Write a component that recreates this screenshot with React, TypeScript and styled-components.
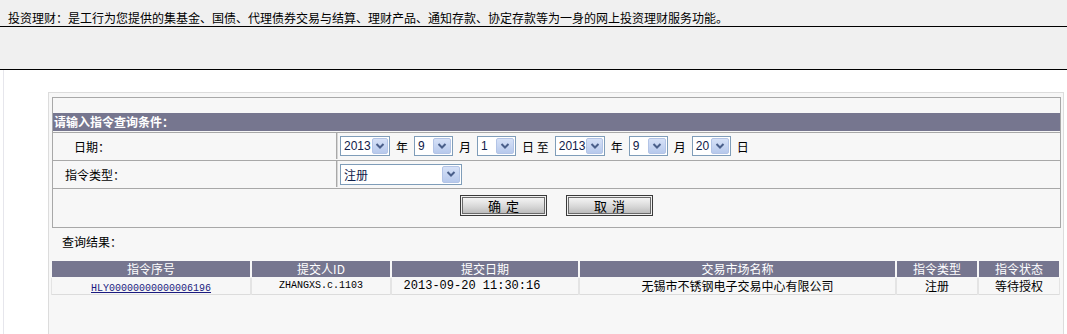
import styled, { createGlobalStyle } from "styled-components"

const GlobalStyle = createGlobalStyle`
  html, body {
    margin: 0;
    padding: 0;
    background: #ffffff;
    overflow: hidden;
  }
  body {
    font-family: "Noto Sans CJK SC", "Liberation Sans", sans-serif;
    font-size: 12px;
    color: #000;
  }
`

const cjk = `"Noto Sans CJK SC", "Liberation Sans", sans-serif`
const mono = `"Liberation Mono", "Noto Sans CJK SC", monospace`

const TopBar = styled.div`
  height: 16px;
  padding: 10px 0 0 8px;
  line-height: 16px;
  background: #f0f0f0;
  border-bottom: 1px solid #000;
  white-space: nowrap;
`

const Band = styled.div`
  height: 42px;
  background: #f0f0f0;
  border-bottom: 1px solid #000;
`

const Main = styled.div`
  padding-left: 3px;
`

const Content = styled.div`
  border-left: 1px solid #e6e6ec;
  padding: 22px 0 0 44px;
`

const Panel = styled.div`
  width: 1016px;
  height: 242px;
  box-sizing: border-box;
  overflow: hidden;
  border: 1px solid #dcdcdc;
  border-bottom: none;
  background: #f7f7f7;
  padding: 4px 0 0 3px;
`

const FormBox = styled.div`
  width: 1007px;
  border: 1px solid #a8a8a8;
  background: #f7f7f7;
`

const Spacer = styled.div`
  height: 15px;
`

const TitleBar = styled.div`
  height: 18px;
  line-height: 18px;
  padding-left: 1px;
  background: #76768f;
  color: #fff;
  font-weight: bold;
`

const FieldRow = styled.div`
  display: flex;
  margin-top: 1px;
  border-top: 1px solid #a8a8a8;
  height: 26px;
`

const LabelCell = styled.div<{ $indent: number }>`
  width: 284px;
  border-right: 1px solid #a8a8a8;
  display: flex;
  align-items: center;
  padding-left: ${p => p.$indent}px;
  box-sizing: border-box;
`

const ValueCell = styled.div`
  flex: 1;
  display: flex;
  align-items: center;
  padding-left: 2px;
  border-left: 1px solid #d6d6d6;
`

const SelectBox = styled.div<{ $w: number; $h?: number }>`
  width: ${p => p.$w}px;
  height: ${p => p.$h ?? 20}px;
  box-sizing: border-box;
  border: 1px solid #7f9db9;
  background: #fff;
  display: flex;
  align-items: stretch;
  font-family: "Liberation Sans", ${cjk};
  font-size: 12px;
  color: #10204a;
`

const SelectText = styled.span`
  flex: 1;
  padding-left: 3px;
  display: flex;
  align-items: center;
  white-space: nowrap;
`

const ArrowBtn = styled.span`
  width: 16px;
  margin: 1px;
  border: 1px solid #b3c4e6;
  border-radius: 2px;
  background: linear-gradient(#d6e1f7, #b7c9ec);
  display: flex;
  align-items: center;
  justify-content: center;
`

const Sep = styled.span`
  margin: 0 6px;
  font-family: ${cjk};
`

const ButtonRow = styled.div`
  display: flex;
  justify-content: center;
  gap: 19px;
  margin-top: 1px;
  border-top: 1px solid #a8a8a8;
  height: 39px;
  padding-top: 6px;
  box-sizing: border-box;
`

const Btn = styled.button`
  width: 87px;
  height: 21px;
  padding: 0;
  border: 1px solid #3a3a3a;
  box-shadow: inset 0 0 0 1px #f0f0f0, inset 0 0 0 2px #6a6a6a;
  background: linear-gradient(#fbfbfb, #d8d8d8 55%, #b4b4b4);
  font-family: ${cjk};
  font-size: 13px;
  letter-spacing: 5px;
  text-indent: 5px;
  color: #000;
  line-height: 17px;
`

const ResultLabel = styled.div`
  margin: 6px 0 0 10px;
  height: 16px;
  line-height: 16px;
`

const ResultGrid = styled.div`
  display: grid;
  grid-template-columns: 198px 138px 186px 315px 80px 80px;
  column-gap: 2px;
  row-gap: 1px;
  margin-top: 11px;
  width: 1007px;
  background: #f7f7f7;
`

const HeadCell = styled.div`
  height: 16px;
  line-height: 16px;
  background: #76768f;
  color: #fff;
  text-align: center;
  white-space: nowrap;
  font-family: ${cjk};
`

const DataCell = styled.div<{ $mono?: boolean; $size?: number; $shift?: number }>`
  height: 16px;
  line-height: 16px;
  text-align: center;
  white-space: nowrap;
  border-bottom: 1px solid #dcdcdc;
  box-shadow: 1px 0 0 #e4e4e4, -1px 0 0 #e4e4e4;
  font-family: ${p => (p.$mono ? mono : cjk)};
  font-size: ${p => p.$size ?? 12}px;
  padding-right: ${p => p.$shift ?? 0}px;
`

const OrderLink = styled.a`
  color: #1b1b80;
  text-decoration: underline;
  font-family: ${mono};
  font-size: 10px;
`

const Chevron = () => (
  <svg width="10" height="8" viewBox="0 0 10 8">
    <path d="M1.5 2 L5 5.5 L8.5 2" fill="none" stroke="#4a5f8a" strokeWidth="2" />
  </svg>
)

const Select: React.FC<{ value: string; w: number; h?: number }> = ({ value, w, h }) => (
  <SelectBox $w={w} $h={h}>
    <SelectText>{value}</SelectText>
    <ArrowBtn>
      <Chevron />
    </ArrowBtn>
  </SelectBox>
)

const headers = ["指令序号", "提交人ID", "提交日期", "交易市场名称", "指令类型", "指令状态"]

export default function App() {
  return (
    <>
      <GlobalStyle />
      <TopBar>
        投资理财：是工行为您提供的集基金、国债、代理债券交易与结算、理财产品、通知存款、协定存款等为一身的网上投资理财服务功能。
      </TopBar>
      <Band />
      <Main>
        <Content>
          <Panel>
            <FormBox>
              <Spacer />
              <TitleBar>请输入指令查询条件：</TitleBar>
              <FieldRow>
                <LabelCell $indent={21}>日期：</LabelCell>
                <ValueCell>
                  <Select value="2013" w={50} />
                  <Sep>年</Sep>
                  <Select value="9" w={39} />
                  <Sep>月</Sep>
                  <Select value="1" w={39} />
                  <Sep>日&nbsp;至</Sep>
                  <Select value="2013" w={50} />
                  <Sep>年</Sep>
                  <Select value="9" w={39} />
                  <Sep>月</Sep>
                  <Select value="20" w={39} />
                  <Sep>日</Sep>
                </ValueCell>
              </FieldRow>
              <FieldRow>
                <LabelCell $indent={12}>指令类型：</LabelCell>
                <ValueCell>
                  <Select value="注册" w={122} h={21} />
                </ValueCell>
              </FieldRow>
              <ButtonRow>
                <Btn>确定</Btn>
                <Btn>取消</Btn>
              </ButtonRow>
            </FormBox>
            <ResultLabel>查询结果：</ResultLabel>
            <ResultGrid>
              {headers.map(h => (
                <HeadCell key={h}>{h}</HeadCell>
              ))}
              <DataCell>
                <OrderLink href="#">HLY00000000000006196</OrderLink>
              </DataCell>
              <DataCell $mono $size={10}>ZHANGXS.c.1103</DataCell>
              <DataCell $mono $shift={26}>2013-09-20 11:30:16</DataCell>
              <DataCell>无锡市不锈钢电子交易中心有限公司</DataCell>
              <DataCell>注册</DataCell>
              <DataCell>等待授权</DataCell>
            </ResultGrid>
          </Panel>
        </Content>
      </Main>
    </>
  )
}
